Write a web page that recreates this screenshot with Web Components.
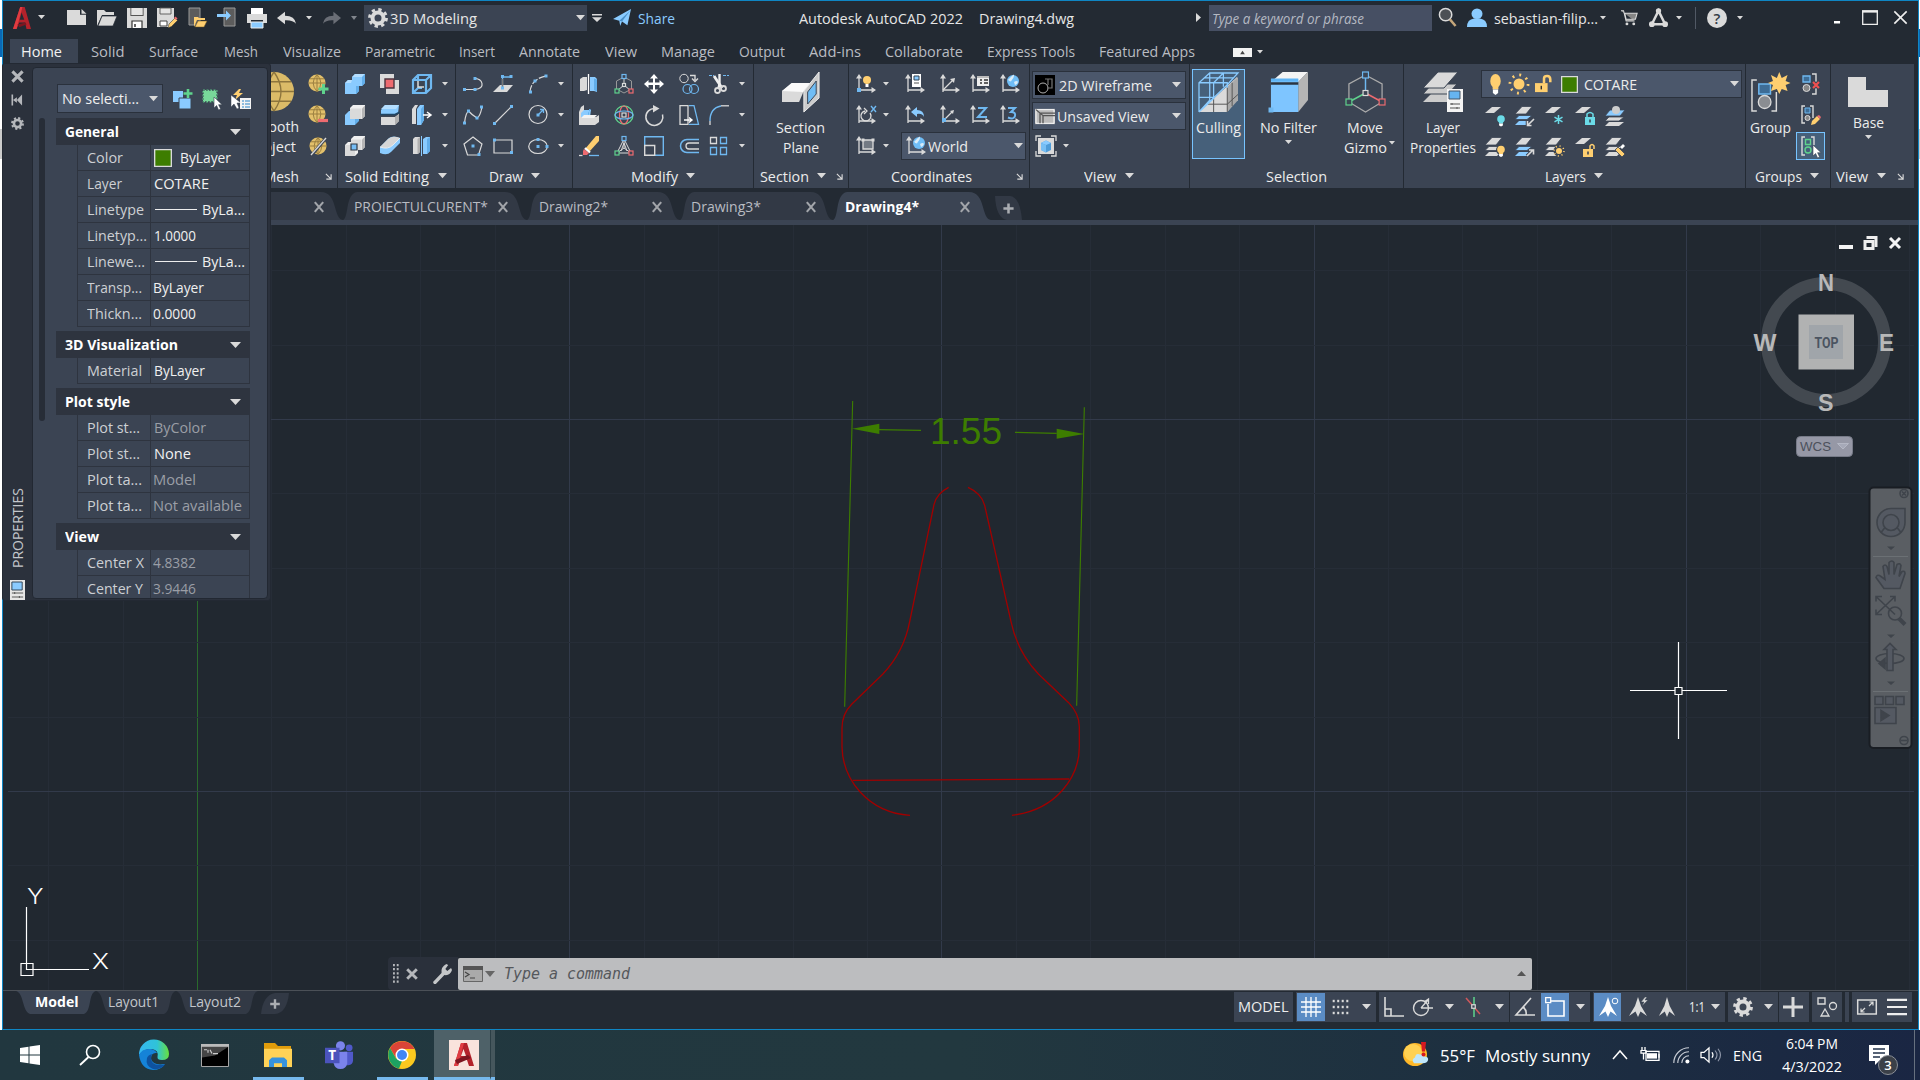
<!DOCTYPE html>
<html lang="en">
<head>
<meta charset="utf-8">
<title>Autodesk AutoCAD 2022</title>
<style>
html,body{margin:0;padding:0;background:#fff;overflow:hidden}
body{font-family:"Open Sans","Noto Sans",sans-serif;width:1920px;height:1080px}
</style>
</head>
<body>
<cad-desktop></cad-desktop>
<script>
const B='#8acbff',L='#dadada',Y='#ffcf70',G='#5fd38d',R='#ee6b70',C='#6fb8f0';
const p=(d,f,s='none',w=1,x='')=>`<path d="${d}" fill="${f||'none'}" stroke="${s}" stroke-width="${w}" ${x}/>`;
const sq=(x,y,c=C,s=3)=>`<rect x="${x-s/2}" y="${y-s/2}" width="${s}" height="${s}" fill="${c}"/>`;
const osq=(x,y,c,s=4)=>`<rect x="${x-s/2}" y="${y-s/2}" width="${s}" height="${s}" fill="#3b4453" stroke="${c}" stroke-width="1.2"/>`;
const ci=(x,y,r,f,s='none',w=1,e='')=>`<circle cx="${x}" cy="${y}" r="${r}" fill="${f}" stroke="${s}" stroke-width="${w}" ${e}/>`;
const cube=(x,y,s,a,b,c)=>p(`M${x} ${y+4}h${s}v${s}h${-s}z`,a)+p(`M${x} ${y+4}l4 -4h${s}l-4 4z`,b)+p(`M${x+s} ${y+4}l4 -4v${s}l-4 4z`,c);
const axes=p('M3 18V3M3 16H18',null,L,1.3)+p('M3 0l3 4.5H0zM20 16l-4.5 3v-6z',L);
const globe=(x,y,r)=>ci(x,y,r,'#6fbdf6')+p(`M${x-r+1} ${y-1}q${r*.8} ${-r*.9} ${r} ${-r+.5}q0 3 -1 4t-2 3q-2 0 -${r-2} -3zM${x+1} ${y+1}q3 -2 ${r-2} 0q-1 3 -3 3z`,'#d9ecf8');
const layer=(x,y,c=L)=>p(`M${x} ${y+6}l7 -6h9l-7 6z`,c);
/* Three stacked sheets; the lower two can take their own colour. */
const stack=(c1=L,c2=L)=>p('M0 19l4-4h12l-4 4z',c1)+p('M0 13.500l4-4h13l-5 4z',c2,'#3b4453',.8)+p('M0 8L7 .500h10L11 8z',L,'#3b4453',.8);
const ball=(r,cx,cy)=>ci(cx,cy,r,'#e2c06b')+p(`M${cx-r} ${cy}H${cx+r}M${cx} ${cy-r}V${cy+r}M${cx-r*.86} ${cy-r*.5}H${cx+r*.86}M${cx} ${cy-r}q${-r*.9} ${r} 0 ${2*r}M${cx} ${cy-r}q${r*.9} ${r} 0 ${2*r}`,null,'#94793c',.9);
const bulb=(x,y,r,c)=>ci(x,y,r,c)+p(`M${x-r*.55} ${y+r*.7}h${r*1.1}v${r*.5}h${-r*1.1}z`,c)+p(`M${x-r*.5} ${y+r*1.2}h${r}v${r*.5}l-${r*.5} ${r*.3}l-${r*.5} -${r*.3}z`,'#fff');
const sun=(x,y,r)=>ci(x,y,r,Y)+ci(x,y,r*1.65,'none',Y,r*.5,`stroke-dasharray="${r*.35} ${r*1.65*2*Math.PI/8-r*.35}"`);
const lock=(x,y,c)=>`<rect x="${x}" y="${y}" width="10" height="8" fill="${c}"/>`+p(`M${x+5} ${y+2.5}v3`,null,'#3b4453',1.6);
const arrow=(x,y)=>p(`M${x} ${y}l0 11 2.600 -2.500 2 4.500 2 -1 -2 -4.300h3.500z`,'#fff','#3b4453',.6);
const gearI=(c=L)=>ci(10,10,5.5,'none',c,4)+ci(10,10,8.4,'none',c,3,'stroke-dasharray="3.300 3.300"');
const tripod=(o)=>o+osq(10,2.500,C)+osq(3,17,G)+osq(17,17,R);
const navA=p('M10 0l3 9 6 10-6.500-4.500L10 20l-2.500-5.500L1 19 7 9z',L);

const ICONS={
 tri:'0 0 10 6|'+p('M0 0h10L5 6z',L), up:'0 0 10 6|'+p('M0 6h10L5 0z','#555'), rt:'0 0 6 10|'+p('M0 0v10l6-5z',L),
 dtri:'0 0 10 6|'+p('M0 0h10L5 6z','#666'), dim:'0 0 10 6|'+p('M0 0h10L5 6z','#80858c'),
 launch:'0 0 8 8|'+p('M1 1l6 6M7 1.500V7H1.500',null,L,1.3),
 acad:'0 0 20 24|'+p('M8 0h5l7 24h-5l-1.600-7H7L4 24H0z','#b3222b')+p('M8 0h2.500L4 24H0z','#e03c41')+p('M9.500 6L7.500 14h5z','#232a33')+p('M5 19l9-2 1 2-8 3z','#7d1620'),
 new:p('M0 2h13v5h6v11H0z',L)+p('M14.500 1l5 5h-5z',L),
 open:p('M0 18V2h7l2 2h8v3H5z',L)+p('M1 18L5 8h15l-4 10z',L,'#232a33',.7),
 save:p('M0 0h20v20H0z',L)+p('M4 0v7.500h12V0',null,'#555',1.200)+p('M4.500 0h11v7H4.500z','#e4e4e4')+p('M5 20v-7h10v7','#fff','#333',1.200)+p('M8 16v3',null,'#333',1.5),
 saveas:p('M0 0h17v12l-5 7H0z',L)+p('M3 0h11v6H3z','#e4e4e4','#555',.9)+p('M3 13h7v5H3z','#fff','#444')+p('M11 20l1-4 6-6 2.500 2.500-6 6z',Y,'#232a33',.5)+p('M17 10l1.500-1.500 2 2L19 12z',R),
 openm:p('M2 0h11v17H2z','#5c5c5c','#999')+p('M7 19V9h4l1 1h6v2h-8z',Y)+p('M8 19l3-6h9l-3 6z',Y,'#6a5320',.5),
 savem:p('M7 0h11v18H7z','#5c5c5c','#999')+p('M0 6h9V2.500l5 5-5 5V9H0z',B),
 print:p('M4 0h12v6H4z','#fff')+p('M0 6h20v9h-4v-3H4v3H0z',L)+p('M4 14h12v6H4z',B,'#eee'),
 undo:p('M0 10l8-7v4.500q10 0 11 9-3-4.500-11-4v4.500z',L),
 redo:p('M20 10l-8-7v4.500q-10 0-11 9 3-4.500 11-4v4.500z','#6a6e76'),
 gear:gearI(),
 cust:'0 0 12 10|'+p('M0 0h12v2H0zM0 4h12L6 10z',L),
 share:p('M0 11L20 0 16 18l-6-4-2 5-1-6z',B)+p('M7 13L19 2 10 14z','#4a90c8'),
 mag:ci(8,7,6.500,'#4c5055',L,1.600)+p('M12.500 12l6 7',null,'#c5a77c',2.6),
 user:ci(10,6,5.500,B)+p('M0 20q0-8 7-9h6q7 1 7 9z',B),
 cart:p('M0 2h3l3 12h10M4.500 5H19l-2 7H6z','#858585',L,1.2)+ci(7,17.500,1.700,L)+ci(15,17.500,1.700,L),
 a360:p('M10 3L3 17H17z',null,L,2.6)+ci(10,3,2.8,L)+ci(3,17,3,L)+ci(17,17,3,L),
 help:ci(10,10,10,L)+`<text x="10" y="15.500" text-anchor="middle" font-size="15" font-family="Open Sans" font-weight="600" fill="#333a44">?</text>`,
 wmin:p('M0 13h11v2.500H0z','#fff'),
 wmax:p('M2.700 3h14.600v13.300H2.700z',null,'#eee',1.3)+p('M2 3.500h16',null,'#eee',2.200),
 wclose:p('M3.500 3.500l13 13M16.500 3.500l-13 13',null,'#eee',1.700),
 featured:'0 0 20 10|'+p('M0 0h20v10H0z','#f2f2f2')+p('M7.500 7h5L10 3z','#444'),
 bigball:'0 0 40 40|'+ci(20,20,20,'#dbbb68')+p('M0 20H40M3 10H37M3 30H37M20 0q-14 20 0 40M20 0q14 20 0 40',null,'#8d753d',1.4),
 meshp:ball(8.500,9,9)+p('M15.500 10v10M10.500 15h10',null,G,3), meshm:ball(8.500,9,9)+p('M10 15.500h10',null,R,3.2), meshs:ball(8.500,10,10)+p('M3 20L18 2',null,'#3b4453',3)+p('M3 19L18 2',null,L,1.3),
 union:p('M0 9l3-3h4V3l3-3h10v9l-3 3h-3v5l-3 3H0z',B)+p('M7 3l3-3h10l-3 3zM0 9l3-3h4l-1 3z','#b4deff')+p('M17 3l3-3v9l-3 3zM11 12h3v5l-3 3z','#62aeea'),
 sub:cube(0,6,10,B,B,'#62aeea')+p('M5 3l3-3h12v11l-3 3H5z','#f0f0f0')+p('M5 3.500h11.500V14H5z',L)+p('M17 3.500l3-3v10.500l-3 3z','#b5b5b5'),
 inter:p('M0 9l3-3h10v11l-3 3H0z','#f0f0f0')+p('M0 9h10v11H0z',L)+p('M6 3l3-3h11v11l-3 3H6z','#f0f0f0')+p('M6 3.500h10.500V14H6z',L)+p('M17 3.500l3-3v10.500l-3 3z','#b5b5b5')+p('M6 8h6v6H6z','#76bdf5','#2f3844',1.200),
 imprint:p('M0 0h14v14H0z',L)+p('M6 6h13v14H6z',L)+p('M5 5h9v9H5z',R,'#4c353f',1.400),
 slice:p('M1 5l4-5h14l-1 9H1z',B)+p('M1 4l4-4h14l-3 4z','#b4deff')+p('M0 9.500h15l5-2.500',null,'#1f4564',1.500)+p('M1 12h14l4-3v7l-4 4H1z',L)+p('M15 12l4-3v7l-4 4z','#b0b0b0'),
 fillet3:p('M0 11l9-9q4-3 11 0v5l-9 9q-4 4-11 1z',B)+p('M0 11L8 3q5-4 12-1l-7 7q-5 5-13 2z','#d6d6d6')+p('M0 11q8 3 13-2l7-7',null,'#f2f2f2',.8),
 extr:p('M1 6l5-5h13v13l-5 5H1zM1 6h13v13M14 6l5-5M6 1v4M1 19l5-5h4',null,C,2.200)+p('M6 7v6h6',null,L,1.500),
 offf:p('M0 4l3-4h3L4 4v15H0z',L)+p('M5 4l3-4h4v15l-3 5H5z',B)+p('M9 4l3-4v15l-3 5z','#62aeea')+p('M11 10h7M15 7l4 3-4 3',null,'#fff',1.5),
 split:p('M1 3l2-2h5v15l-2 2H1z',L)+p('M5.500 3l2.500-2v15l-2.500 2z','#b0b0b0')+p('M11 3l3-2h4v14l-3 3h-4z',B)+p('M15 3l3-2v14l-3 3z','#62aeea')+p('M9.500 0v20',null,B,1),
 pline:p('M1 15.500h11q8-1 7-6t-8-5',null,L,1.2)+sq(1.500,15.500)+sq(12,15.500)+sq(12,4.500),
 polysol:p('M0 18l7-7h13l-6 7z',L)+p('M9.500 13V3h9',null,C,1.300)+p('M9.500 5v8',null,'#777',1.500)+sq(9.500,2.500)+sq(18,2.500)+sq(9.500,14),
 arc:p('M2 18Q3 5 18 2',null,L,1.2,'stroke-dasharray="7 1.500"')+sq(2.500,18)+sq(18,2)+sq(7,7),
 spline:p('M1.500 18Q3 6 6 6.500 9 10 14 13 17 12 19 2',null,L,1.2)+sq(1.500,18)+sq(5.500,6)+sq(14,13)+sq(18.500,2),
 line:p('M2 18L18 2',null,L,1.2)+sq(1.500,18.500)+sq(18.500,1.500),
 circ:ci(10,9.500,9,'none',L,1.200)+p('M10 10l5-5M12 4.500h3.500V8',null,C,1.300)+sq(10,10),
 poly:p('M10 1l9 7-3.500 11h-11L1 8z',null,L,1.200)+sq(10,10)+sq(16,18.500),
 rect:p('M1 4h18v13H1z',null,L,1.200)+sq(1.500,4)+sq(18.500,16.500),
 ell:`<ellipse cx="10" cy="10.500" rx="9.300" ry="7" fill="none" stroke="${L}" stroke-width="1.200"/>`+sq(10,10.500)+sq(19,10.500)+sq(10,3.500),
 mirror3:p('M1 5l3-2h4v13l-3 1H1z',L)+p('M11 3h5l2 2v13l-3-1h-4z',B)+p('M15 4.500l3 1v12l-3-1.500z','#62aeea')+p('M9.500 0v20',null,'#fff',1.300),
 gmove:tripod(p('M10 3l7.500 4v8L10 19l-7.500-4V7z',null,'#999')+p('M10 3v8L3 17M10 11l7 6',null,L)+osq(10,11,L,3)),
 grot:ci(10,10,9,'none',G,1.300)+`<ellipse cx="10" cy="10" rx="4.500" ry="9" fill="none" stroke="${R}" stroke-width="1.200"/><ellipse cx="10" cy="10" rx="9" ry="4" fill="none" stroke="${C}" stroke-width="1.200"/>`+osq(10,10,L,4),
 gscale:tripod(p('M10 3L3 17h14zM10 3v9L3 17M10 12l7 5M7 15l3-8 3 8',null,L)),
 move:p('M10 0l4 4.500h-3v4h4.500V6L20 10l-4.500 4v-3H11v4.500h3L10 20l-4-4.500h3V11H4.500v3L0 10l4.500-4v2.500H9v-4H6z','#fff'),
 copy:ci(5,4.500,4.200,'none',L)+ci(8.500,15,4.500,'none',C,1.200)+ci(15,15,4.500,'none',C,1.200)+p('M11 1.500h5V6M13 4.500l3 3 3-3',null,L,1.400),
 trim:p('M0 1.500h5M14 1.500h6',null,C,1.200,'stroke-dasharray="3 1"')+p('M5 2l8 12',null,'#eee',2.800)+p('M10.500 0V10l-1 4',null,'#eee',2.400)+ci(8.500,16.500,2.500,'none',L,1.800)+ci(14.500,14.500,2.500,'none',L,1.800),
 align3:p('M0 7l2-5 3-2v6l-3 4v2h15l3-2v7l-4 3H0z',L)+p('M2 8l3-3h7l-1 7H2z',B)+p('M9 8l3-4h-1l-1-0v8z','#62aeea')+p('M3 12l2-2h13l-3 3H3z','#f2f2f2'),
 rot:p('M11 3.500A8.500 8.500 0 1 0 18.500 9.500',null,L,1.500)+p('M9 0l6.500 3.500-6.500 4z',L),
 stretch:p('M1 .7h8v18.600H1z',null,L,1.300)+p('M10 .7h5l4.500 18.600H10',null,C,1.300)+p('M5 15h8M10 12.500l3 2.500-3 2.500',null,'#fff',1.400),
 fillet:p('M1 20V16',null,L,1.300)+p('M1 16Q1 3 12 1',null,C,1.400)+p('M12 .8h8',null,L,1.300),
 erase:p('M6 13L17 0h3v5L10 16z',Y)+p('M5 13l5 4-2 2H4v-4z',R)+p('M6 12l5 4.500',null,'#fff',2.200)+p('M0 19.500h3.500',null,L,1.300)+p('M10 19.500h10',null,C,1.300),
 scale:p('M.7 9V.7h18.600v18.600H11',null,C,1.400)+p('M.7 9.500h10v9.800H.7z',null,L,1.400),
 offset:p('M20 3.500H8a6.500 6.500 0 0 0 0 13h12',null,C,1.500)+p('M20 7h-10a3 3 0 0 0 0 6h10',null,L,1.300)+ci(7,10,2.500,'none','#3b4453',0),
 array:p('M1.500 1.500h6v6h-6z',null,L,1.300)+p('M1.500 11.500h6v7h-6zM11.500 1.500h6v6h-6zM11.500 11.500h6v7h-6z',null,C,1.300),
 secplane:'0 0 40 40|'+p('M0 19l10-7h16l-8 18H0z',L)+p('M0 19l10-8h24L22 20z','#fafafa')+p('M23 19L39 0v26L23 40z','#ccc','#eee',1)+p('M27 20L36 9v13l-9 10z','#70bdf5','#3a4452',1),
 ucs1:axes+ci(11,6,4,Y)+p('M9.500 10h3v3h-3z','#fff')+sq(3,16,C,4),
 ucs2:axes+p('M14 8a5 5 0 1 1-5-2M8 3l3 3-3 3',null,L,1.300)+p('M15 1l5 6M20 1l-5 6',null,C,1.400),
 ucs3:axes+p('M7 4h10v9H7z','#737a84',L,1.300)+sq(7,4,L)+sq(17,4,L),
 ucs4:axes+p('M7 0h9v13H7z','#fff')+p('M9 2h5v4H9z',B,'#345')+p('M9 9h5',null,'#555'), ucs5:axes+p('M3 16L13 6',null,L,1.300)+p('M15 4l-5 1 4 4z',L),
 ucs6:axes+p('M7 2h12v10H7z','#eee')+p('M10 6h2M10 9h2M14 6h4M14 9h4',null,'#333',1.300)+p('M7 2h12v2H7z','#bbb'), ucs7:axes+globe(13,7,6),
 ucs8:axes+p('M6 7l6-5v3q7 0 7 7-2-4-7-3v3z',B), ucs9:axes+p('M5 14l7-7',null,L,1.300)+p('M14 5l-4 1 3 3z',L)+sq(4,15,C,4),
 ucs10:axes+p('M8 3h8L8 12h9',null,C,2), ucs11:axes+p('M8 3h7l-4 4q5 0 4 4t-7 1.500',null,C,2),
 wire:p('M0 0h20v20H0z','#000')+ci(8,13,5,'none','#b0b0b0')+p('M10 4h7v9h-5M13 4v6',null,'#777',1.200),
 uview:p('M0 1h20v18H0z','#bbb')+p('M1 2h18v16H1z',null,'#fff')+p('M5 18V6h15M8 18V9h12M1 2l7 7',null,'#555',1.300),
 vbox:p('M2 2h16v16H2z',L)+p('M0 5V0h5M15 0h5v5M20 15v5h-5M5 20H0v-5',null,L,1.300)+p('M5 7l5-2.500L15 7v7l-5 2.500L5 14z','#4f9cd8')+p('M5 7l5 2 5-2-5-2.500z',B)+p('M5 7l5 2v7.500L5 14z','#78bff5'),
 cull:'0 0 40 40|'+p('M0 40L39 4v23L29 40z',L)+p('M29 14l11-10v24L29 40z','#a9a9a9')+p('M15 26v14M29 14v26M9 32h20l11-10M34 10v24',null,'#555',1)+p('M0 40V10L11 0h29L29 12 0 40M0 10h29v5M10 40M15 10v16L0 40M0 25h15M15 10L25 0M11 0v28L0 40M5 5h30M25 0v14',null,B,1.300),
 nofilter:'0 0 40 40|'+p('M2 10L14 0h26L30 10z','#f4f4f4')+p('M30 10L40 0v28L30 40z','#b5b5b5')+p('M2 7h28v33H2z','#7ec5ff')+p('M2 11.500h28',null,'#2b3440',2.500)+p('M2 8h28',null,'#5eb4f5',3)+sq(2,38,C,5),
 mgizmo:'0 0 40 40|'+p('M20 3l17 9v18L20 40 3 30V12z',null,'#aaa',1.300)+p('M20 3v18',null,C,1.500)+p('M20 21L3 30',null,G,1.500)+p('M20 21l17 9',null,R,1.500)+osq(20,3,C,6)+osq(3,30,G,6)+osq(37,30,R,6)+osq(20,21,L,5),
 layerp:'0 0 40 40|'+p('M0 30l9-9h26l-8 9z','#ccc')+p('M0 22l9-10h25l-9 10z','#ccc','#3b4453',1)+p('M0 16L15 0h20L21 16z',L,'#3b4453',1)+p('M24 17h16v23H24z','#f4f4f4')+p('M26 19h11v8H26z','#66b4f0','#456')+p('M27 32h10M27 36h10M29 31v2M34 35v2',null,'#555',1),
 bulb:bulb(10,7,7,Y),sun:sun(10,10,5.500),
 unlock:p('M0 9h14v10H0z',Y)+p('M10 9V4q0-3 3.500-3T17 5v3',null,Y,2.800)+p('M7 12v4',null,'#333',1.600),
 green:p('M.75.75h18.500v18.500H.75z','#3d7d00',L,1.500),
 lo1:layer(0,1)+bulb(16,13,3.800,'#6bdbe8'), lo2:stack(B,B)+p('M19 13l-6 6M12.500 15v4.500h4',null,'#3b4453',3.500)+p('M19 13l-6 6M12.500 15v4.500h4',null,L,1.600), lo3:layer(0,1)+p('M13.500 9v9M9.500 11.200l8 4.600M17.500 11.200l-8 4.600',null,'#6bdbe8',1.500), lo4:layer(0,1)+lock(10,11,'#6bdbe8')+p('M12 11V8q3-3 6 0v3',null,'#6bdbe8',1.500),
 lo5:p('M0 20l4-4h15l-5 4z',L)+p('M0 15l4-4h15l-5 4z',L,'#3b4453',.8)+p('M0 10l5-6h15l-5 6z',B,'#3b4453',.8)+ci(11,4,4,'#ccc'), lo6:stack()+ci(16,13,5,'#3b4453')+bulb(16,12.500,3.800,Y), lo7:stack(B,B)+p('M12 19l6-6M14 13h5v5',null,'#3b4453',3.500)+p('M12 19l6-6M14 13h4.500v4.500',null,L,1.600), lo8:stack()+ci(14,14,5.500,'#3b4453')+sun(14,14,3), lo9:layer(0,1)+lock(8,12,Y)+p('M15 12V9q2-3 4 0v3',null,Y,1.500), lo10:stack()+p('M10 13l3-3 7 7-3 3z',Y,'#3b4453',.8)+p('M15 10l3-3 2 2-3 3z','#fff'),
 group:'0 0 40 40|'+p('M6 8H1v31h5M21 39h5V20',null,L,1.500)+p('M8 12h12v10H8z','#3e6d96',C,1.500)+ci(14,30,6.500,'#8a8d92',L,1.300)+p('M29 0l2.500 6 6-3-2 6 5 2-5 2 2 6-6-2-2.500 5-2.500-5-6 2 2-6-5-2 5-2-2-6 6 3z',Y),
 ungroup:p('M1 2h7v6H1z','#3e6d96',C,1.300)+ci(4.500,14,3.500,'#888',L)+p('M10 0h4v20h-4',null,L,1.400)+p('M11 8l6 6M17 8l-6 6',null,'#3b4453',4)+p('M11 8l6 6M17 8l-6 6',null,'#f05050',2.200),
 gedit:p('M4 1H1v17h3M9 1h3v12',null,L,1.400)+p('M4 3h5v5H4z','#3e6d96',C)+ci(6.500,13,2.500,'#888',L)+p('M10 20l1-4 5-5 3 3-5 5z',Y)+p('M16 11l2-1 2 2-1 2z',R),
 gsel:p('M4 1H1v18h3M10 1h3v8',null,L,1.400)+p('M4.500 3.500h5v5h-5z',null,G,1.400)+ci(7,14,3,'none',G,1.400)+arrow(12,9),
 base:'0 0 40 30|'+p('M0 0h18v13h22v17H0z',L),
 x:p('M4 4l12 12M16 4L4 16',null,'#b5b7bb',3.600), xx:p('M4 3l12 14M16 3L4 17',null,'#a2a5aa',3),
 pin:p('M2 2v16',null,'#b5b7bb',2.500)+p('M3 10l6-4v8z','#b5b7bb')+p('M9 10l8-8v16z','#b5b7bb'),
 pgear:gearI('#b5b7bb'),
 padd:p('M0 2h10v11H0z',B)+p('M6 9h12v11H6z',B,'#3b4453',1)+p('M15 0v9M10.500 4.500h9',null,G,2.600),
 psel:p('M1 1h14v12H1z','#78d89a')+p('M1 1h14v12H1z',null,'#3b4453',1.300,'stroke-dasharray="2 1"')+p('M1 1h14v12H1z',null,G,.8,'stroke-dasharray="2 1.500"')+arrow(12,8),
 pquick:p('M8 0L2 6h4l-2 5 8-7H8l2-4z',Y)+p('M0 6v12l3-3 3 5 2-1-2-5h4z','#fff','#3b4453',.5)+p('M9 9h11v11H9z','#f4f4f4')+p('M11 12h2M11 15h2M11 18h2M14 12h5M14 15h5M14 18h5',null,'#2b84c8',1.200),
 pcard:'0 0 16 20|'+p('M0 0h16v20H0z','#e6e6e6')+p('M2 2h11v8H2z',B,'#345',1)+p('M2 13h12M2 17h12M5 12v2M10 16v2',null,'#555'),
 plus:p('M10 4v12M4 10h12',null,'#aaadb2',3),
 grip:'0 0 8 24|'+[0,4.500,9,13.500,18].map(y=>`<path d="M0 ${y+1}h2.500v2.500H0zM5 ${y+1}h2.500v2.500H5z" fill="#b5b7bb"/>`).join(''),
 wrench:p('M1 20L0 18 9 9q-1-6 5-9l2 1-3 4 2 2 4-3 1 2q-2 6-8 5L3 20z','#c4c6c8'),
 cmd:'0 0 20 16|'+p('M.5.5h19v15H.5z','#aaa','#666')+p('M0 0h20v4H0z','#555')+p('M2 6l4 2.500L2 11M7 12h5',null,'#444',1.200),
 sgrid:p('M5 0v20M10 0v20M15 0v20M0 5h20M0 10h20M0 15h20',null,'#fff',1.300),
 sdots:[2,7.300,12.600,18].map(x=>[4,10,16].map(y=>sq(x,y,L,2.400)).join('')).join(''),
 sortho:p('M1 0v19h19M1 12h6v7',null,L,1.600), spolar:ci(8,11,7.500,'none',L,1.400)+p('M8 11h12M8 11l7-8M11 5l4.500-3v5',null,L,1.300),
 siso:p('M2 1l14 16',null,'#d0585c',1.500)+p('M10 0v20',null,G,1.500)+osq(9.500,9.500,L,3.500), sang:p('M16 1L1 18h19M8 10q4 3 3 8',null,L,1.600), sosnap:p('M6 4h13v15H3V7',null,'#fff',1.600)+p('M.7.7h5v5h-5z',null,'#fff',1.300),
 sa1:navA.replaceAll(L,'#fff')+ci(17,4,2.800,'none','#fff'), sa2:navA+p('M17 0l-4 5h3l-2 4 6-6h-3l2-3z',L,'#3b4453',.5), sa3:navA,
 splus:p('M10 0v20M0 10h20',null,L,3), siso2:p('M1 1h7v6H1z',null,L,1.400)+ci(16,9,3.500,'none',L,1.300)+p('M8 12l4 7H4z',null,L,1.300),
 sfull:p('M.7 3h18.600v14H.7z',null,L,1.500)+p('M12 9l4-4M12.500 5H16v3.500M8 11l-4 4M4 11.500V15h3.500',null,L,1.200), sburger:p('M0 2h20M0 10h20M0 18h20',null,'#eee',2.400),
 win:p('M0 3l8.500-1.200V9.500H0zM9.500 1.600L20 0v9.500H9.500zM0 10.500h8.500v7.700L0 17zM9.500 10.500H20V20L9.500 18.400z','#fff'),
 tsearch:ci(13,7,6.500,'none','#fff',1.600)+p('M8.500 12L0 20',null,'#fff',1.800),
 edge:'0 0 30 30|<defs><linearGradient id="e1" x1="0" x2="1"><stop offset="0" stop-color="#35b8f1"/><stop offset=".6" stop-color="#2fc3d8"/><stop offset="1" stop-color="#68e03c"/></linearGradient></defs>'+p('M0 15A15 15 0 0 1 30 14Q30 20 23 20 18 20 18.500 17 20 10 13 9 5 8 0 15z','url(#e1)')+p('M0 15Q3 8 12 9 16 9.500 18 13 12 12 12 19 14 26 26 24 22 30 14 30 2 29 0 15z','#1583d8')+p('M12 17q0 9 10 8 4 0 5-2-4 7-13 6Q6 26 8 18q1-3 5-4z','#0e529f'),
 tcmd:'0 0 28 24|'+p('M.5.5h27v23H.5z','#000','#aaa')+p('M0 0h28v3H0z','#bbb')+p('M1 3h26L14 12 1 14z','#454545')+p('M3 6h3M7 6v3M9 6l2 4M12 10h5',null,'#ccc',1.200),
 folder:'0 0 28 26|'+p('M0 0h11l3 3h13v8H0z','#e09c0b')+p('M0 6h28v19H0z','#ffd257')+p('M5 25V18l3-3h12l3 3v7h-5v-4h-8v4z','#3792dc'),
 teams:'0 0 30 30|'+ci(16,5,4.700,'#7b83eb')+ci(25,7,3.500,'#5059c9')+p('M20 11h9v9q0 5-5 5h-4z','#5059c9')+p('M9 11h14v12q-1 6-7 6t-7-6z','#7b83eb')+p('M0 7h15v16H0z','#4b53bc')+`<text x="7.500" y="20" text-anchor="middle" font-size="14" font-family="Open Sans" font-weight="700" fill="#fff">T</text>`,
 chrome:'0 0 28 28|'+ci(14,14,14,'#fbc91f')+p('M2 7A14 14 0 0 1 26.500 8H14L8 17z','#db4437')+p('M2 7l6 10.500L14 20l-3 7.500A14 14 0 0 1 2 7z','#1da362')+ci(14,14,6.500,'#fff')+ci(14,14,5,'#4286f4'),
 tacad:'0 0 30 30|'+p('M0 0h30v30H0z','#f9e3dc')+p('M12 3h6l7 23h-5l-2-6h-7l-2 6H5z','#b3222b')+p('M12 3h3L9 26H5z','#df3c42')+p('M14.500 9l-2.500 7h5z','#f9e3dc')+p('M6 20l13-5 3 3-14 6z','#7d1620'),
 weather:'0 0 26 26|'+ci(12,13,12,'#ffb828')+ci(10,11,9,'#ffd152')+p('M11 22q-3-4 1-6 1-5 5-3 3-1 4 2 5 0 4 4-1 3-5 3z','#bfe6fb')+p('M18 0h5l-1 10h-3z','#d71920')+ci(20.500,13,2,'#d71920'),
 caret:p('M3 14l7-8 7 8',null,'#fff',1.500), batt:p('M6 6h13v10H6z',null,'#fff',1.300)+p('M7 8h10v6H7z','#fff')+p('M19 9v4M2 1v4M5 1v4M1 5h5v3H1zM3.500 8v7',null,'#fff',1.300),
 wifi:p('M1 20A19 19 0 0 1 20 1M6 20A14 14 0 0 1 20 6M11 20a9 9 0 0 1 9-9',null,'#c9ced6',1.400)+ci(18,18,2.500,'#fff'),
 vol:p('M1 7h3l5-5v16l-5-5H1z',null,'#fff',1.300)+p('M12 7q2 3 0 6',null,'#fff',1.200)+p('M15 5q4 5 0 10M18 3q5 7 0 14',null,'#8b93a5',1.200),
 notif:'0 0 20 20|'+p('M0 0h20v16H10l-4 4v-4H0z','#fff')+p('M4 4h12M4 8h12M4 12h7',null,'#20304a',1.500),
 mdimin:'0 0 14 5|'+p('M0 0h14v4H0z','#f4f4f4'), mdires:'0 0 14 14|'+p('M3 0h11v11h-3V3H3z','#eee')+p('M1.500 5.500h8v7h-8z',null,'#eee',3), mdix:'0 0 14 14|'+p('M2 2l10 10M12 2L2 12',null,'#f4f4f4',3)
};

const define=(n,css,render)=>customElements.define(n,class extends HTMLElement{
  connectedCallback(){ if(this.shadowRoot)return; const r=this.attachShadow({mode:'open'}); r.innerHTML=`<style>${css}</style>`+render(this); if(this.tagName=='CAD-TEXT')this.fit(r);}
  fit(r){const s=r.querySelector('span'),w=parseFloat(this.getAttribute('w')); const n=s.getBoundingClientRect().width; if(w&&n)s.style.transform=`scaleX(${w/n})`;}
});
define('cad-icon',':host{display:block;flex:none;line-height:0}svg{display:block;width:100%;height:100%;overflow:visible}',e=>{
  let c=ICONS[e.getAttribute('name')],v='0 0 20 20'; const i=c.indexOf('|'); if(i>0){v=c.slice(0,i);c=c.slice(i+1);}
  return `<svg viewBox="${v}" preserveAspectRatio="none">${c}</svg>`;});
define('cad-text',':host{display:block;flex:none;white-space:nowrap;line-height:20px}span{display:inline-block;transform-origin:0 50%}',()=>'<span><slot></slot></span>');
define('cad-row',':host{display:flex;align-items:center;flex:none;box-sizing:border-box}',()=>'<slot></slot>');

/* Flow helpers: every item carries its left edge and width; a row turns them into successive margins. */
const T=(t,x,w,o='')=>[x,w,m=>`<cad-text w="${w}" style="width:${w}px;margin-left:${m}px;${o}">${t}</cad-text>`];
const I=(n,x,w=20,h=20,o='')=>[x,w,m=>`<cad-icon name="${n}" style="width:${w}px;height:${h}px;margin-left:${m}px;${o}"></cad-icon>`];
const X=(x,w,o,inner='')=>[x,w,m=>`<cad-row style="width:${w}px;margin-left:${m}px;${o}">${inner}</cad-row>`];
const tri=(cx,s=9,o='')=>I('tri',cx-s/2,s,s*.58,o);
const row=(x0,h,items,o='')=>`<cad-row style="height:${h}px;${o}">${flow(x0,items)}</cad-row>`;
function flow(x0,items){let c=x0;return items.map(([x,w,f])=>{const s=f(+(x-c).toFixed(2));c=x+w;return s;}).join('');}

define('cad-titlebar',':host{display:block;height:35px;color:#e6e6e6;font-size:15px}',()=>row(3,33,[
 I('acad',13,18,22),tri(41,7),I('new',67,20,19),I('open',97),I('save',127),I('saveas',157),I('openm',187),I('savem',217),I('print',247),I('undo',277,20,18),tri(309,6),I('redo',322,19,18),I('dim',351,6,4),
 X(364,223,'height:26px;background:#3b4453',flow(364,[I('gear',368),T('3D Modeling',390,87),tri(580,9)])),
 I('cust',592,10,8),I('share',613,18,18),T('Share',638,37,'color:#8acbff'),T('Autodesk AutoCAD 2022',799,164),T('Drawing4.dwg',979,95),I('rt',1196,5,9),
 X(1209,223,'height:26px;background:#464f63',flow(1209,[T('Type a keyword or phrase',1212,152,'font-style:italic;color:#b5b9c2')])),
 I('mag',1438,19,19),I('user',1467,20,19),T('sebastian-filip...',1494,104),tri(1603,6),I('cart',1621,17,17),I('a360',1649,19,19),tri(1679,6),X(1695,1,'height:22px;background:#515965'),I('help',1707),tri(1740,6),
 I('wmin',1834,11,20),I('wmax',1860,20,20),I('wclose',1891,19,19)]));

define('cad-menutabs',':host{display:block;height:28px;color:#b9bcc2;font-size:15px}',()=>row(3,28,[
 X(10,68,'height:25px;background:#3b4453;align-self:flex-end;color:#f2f2f2;padding-bottom:2px',flow(10,[T('Home',21,41)])),
 ...[['Solid',91,33.5],['Surface',149,49],['Mesh',224,34],['Visualize',283,58],['Parametric',365,70],['Insert',459,36],['Annotate',519,61],['View',605,32],['Manage',661,54],['Output',739,46],['Add-ins',809,52],['Collaborate',885,78],['Express Tools',987,88],['Featured Apps',1099,96]].map(a=>T(...a,'margin-top:1px')),
 I('featured',1233,19,9,'margin-top:4px'),tri(1260,6,'margin-top:4px')]));

const combo=(x,w,inner)=>X(x,w,'height:28px;background:#4b576b;border:1px solid #2a313c',flow(x+1,inner));
const panel=(x0,x1,body,label)=>`<cad-panel style="width:${x1-x0}px">${body}${row(x0,24,label,'margin-top:auto')}</cad-panel>`;
define('cad-panel',':host{display:flex;flex-direction:column;flex:none;height:124px;box-sizing:border-box;border-right:1px solid #232a33;padding-top:4px}',()=>'<slot></slot>');
const big=(x0,x,w,ic,iw,ih,lines,o='',t='')=>`<cad-big style="width:${w}px;margin-left:${x-x0}px;${o}"><cad-icon name="${ic}" style="width:${iw}px;height:${ih}px;align-self:center"></cad-icon>${lines.map(l=>`<cad-text w="${l[1]}" style="width:${l[1]}px;align-self:center">${l[0]}</cad-text>`).join('')}${t}</cad-big>`;
define('cad-big',':host{display:flex;flex-direction:column;flex:none;box-sizing:border-box;padding-top:4px}::slotted(cad-icon){margin-bottom:5px}',()=>'<slot></slot>');
define('cad-hbox',':host{display:flex;height:93px;flex:none}',()=>'<slot></slot>');
define('cad-vbox',':host{display:flex;flex-direction:column;flex:none}',()=>'<slot></slot>');
const rows3=(x0,rs)=>rs.map(r=>row(x0,31,r)).join('');
const smallTri='<cad-icon name="tri" style="width:7px;height:4px;align-self:center;margin-top:3px"></cad-icon>';
define('cad-ribbon',':host{display:flex;width:1912px;height:124px;background:#3b4453;color:#ececec;font-size:15px;overflow:hidden}',()=>
 panel(3,338,`<cad-hbox>${big(3,248,51,'bigball',40,39,[['Smooth',51],['Object',44]])}<cad-vbox>${rows3(299,[[I('meshp',308)],[I('meshm',308)],[I('meshs',308)]])}</cad-vbox></cad-hbox>`,[T('Mesh',264,35),I('launch',325,7,7)])+
 panel(338,456,rows3(338,[[I('union',345),I('imprint',380),I('extr',412),tri(445,6)],[I('sub',345),I('slice',380),I('offf',412),tri(445,6)],[I('inter',345),I('fillet3',380),I('split',412),tri(445,6)]]),[T('Solid Editing',345,84),tri(442)])+
 panel(456,573,rows3(456,[[I('pline',463),I('polysol',493),I('arc',528),tri(561,6)],[I('spline',463),I('line',493),I('circ',528),tri(561,6)],[I('poly',463),I('rect',493),I('ell',528),tri(561,6)]]),[T('Draw',489,34),tri(535)])+
 panel(573,754,rows3(573,[['mirror3','gmove','move','copy','trim'],['align3','grot','rot','stretch','fillet'],['erase','gscale','scale','offset','array']].map(r=>[...r.map((n,i)=>I(n,[579,613.5,644,679,709][i])),tri(742,6)])),[T('Modify',631,47),tri(690)])+
 panel(754,849,`<cad-hbox>${big(754,754,93,'secplane',38,40,[['Section',49],['Plane',36]])}</cad-hbox>`,[T('Section',760,49),tri(821),I('launch',836,7,7)])+
 panel(849,1030,rows3(849,[[I('ucs1',856),tri(886,6),I('ucs4',905),I('ucs5',940),I('ucs6',970),I('ucs7',1000)],[I('ucs2',856),tri(886,6),I('ucs8',905),I('ucs9',940),I('ucs10',970),I('ucs11',1000)],[I('ucs3',856),tri(886,6),combo(901,125,[I('ucs7',906),T('World',928,40),tri(1018)])]]),[T('Coordinates',891,81),I('launch',1016,7,7)])+
 panel(1030,1190,row(1030,34,[combo(1032,154,[I('wire',1035),T('2D Wireframe',1059,93),tri(1176)])])+row(1030,28,[combo(1032,154,[I('uview',1035,20,17),T('Unsaved View',1057,92),tri(1176)])])+row(1030,31,[I('vbox',1036),tri(1066,6)]),[T('View',1084,32),tri(1129)])+
 panel(1190,1404,`<cad-hbox>${big(1190,1192,53,'cull',39,39,[['Culling',45]],'background:#46607a;border:1px solid #77c4ff;height:90px;margin-top:1px;padding-top:3px;margin-bottom:-2px')}${big(1245,1258,60,'nofilter',39,40,[['No Filter',57]],'',smallTri)}${big(1318,1341,48,'mgizmo',39,40,[['Move',36],['Gizmo',43]])}${row(1389,93,[tri(1392,6)],'padding-top:73px;align-items:flex-start')}</cad-hbox>`,[T('Selection',1266,61)])+
 panel(1404,1746,`<cad-hbox>${big(1404,1408,70,'layerp',40,40,[['Layer',34],['Properties',66]])}<cad-vbox>${row(1478,32,[combo(1481,261,[I('bulb',1488,15,20),I('sun',1509),I('unlock',1535,18,18),I('green',1561,17,17),T('COTARE',1584,53),tri(1734)])])}${row(1478,31,[1,2,3,4,5].map(i=>I('lo'+i,1455+30*i)))}${row(1478,31,[6,7,8,9,10].map(i=>I('lo'+i,1305+30*i)))}</cad-vbox></cad-hbox>`,[T('Layers',1545,41),tri(1598)])+
 panel(1746,1831,`<cad-hbox>${big(1746,1749,43,'group',39,40,[['Group',41]])}<cad-vbox>${rows3(1792,[[I('ungroup',1802)],[I('gedit',1801)],[X(1796,29,'height:28px;background:#46607a;border:1px solid #77c4ff',flow(1797,[I('gsel',1801)]))]])}</cad-vbox></cad-hbox>`,[T('Groups',1755,47),tri(1814)])+
 panel(1831,1915,`<cad-hbox>${big(1831,1843,50,'base',40,30,[['Base',31]],'padding-top:9px;',smallTri)}</cad-hbox>`,[T('View',1836,32),tri(1881),I('launch',1897,7,7)]));

define('cad-doctabs',':host{display:block;height:37px;background:#232a33;color:#b9bcc2;font-size:14.5px}',()=>{
 const tab=(x,w,t,tx,tw,cx,o='')=>X(x,w,`height:28px;background:#323945;padding-top:2px;clip-path:path('M0 28C6 26 2 2 14 0H${w-22}C${w-5} 0 ${w-10} 27 ${w} 28Z');${o}`,flow(x,[...(t?[T(t,tx,tw)]:[]),I('xx',cx-7,14,14)]));
 return row(3,32,[tab(180,163,'',0,0,319),tab(343,184,'PROIECTULCURENT*',354,134,503),tab(527,153,'Drawing2*',539,69,657),tab(680,153,'Drawing3*',691,70,811),tab(833,158,'Drawing4*',845,74,965,'background:#3b4453;color:#fff;font-weight:700'),X(995,27,"height:24px;background:#323945;clip-path:path('M0 0H15Q25 1 27 24H12Q1 22 0 0Z')",flow(995,[I('plus',1000,17,17)]))],'align-items:flex-end')+`<cad-row style="height:5px;background:#3b4453"></cad-row>`;});

define('cad-drawing',':host{display:block;position:relative;height:765px;background:#212830}svg{display:block;width:1915px;height:765px}cad-command{position:absolute;left:385px;top:732px}',()=>{
 let g='';
 for(let i=-12;i<=13;i++){const x=941.9+i*74.44; if(x<8||x>1913)continue; const m=i%5==0; g+=`<path d="M${Math.floor(x)+.5} 225V990" stroke="${i==-10?'#2a6a2c':m?'#323a4a':'#262d37'}"/>`;}
 for(let i=-2;i<=7;i++){const y=419.5+i*74.4;if(y<226)continue;g+=`<path d="M8 ${Math.floor(y)+.5}H1914" stroke="${i%5==0?'#323a4a':'#262d37'}"/>`;}
 const st=(t,x,y,s,w,c,o='')=>`<text x="${x}" y="${y}" font-size="${s}" textLength="${w}" lengthAdjust="spacingAndGlyphs" fill="${c}" ${o}>${t}</text>`;
 const D='#3d7d00',AR='font-family="Liberation Sans"',bd=AR+' font-weight="700"',N='#3f444b';
 return `<svg viewBox="3 225 1915 765">${g}
 <g transform="translate(800 380) scale(.33333)" fill="none" stroke="#a00000" stroke-width="4"><path d="M446 322Q410 340 402 374L329 725Q312 815 248 883L155 973Q126 1002 126 1045V1100C128 1200 205 1298 330 1306"/><path d="M504 322Q545 340 554 376L633 725Q652 815 716 883L806 968Q838 1002 838 1040V1100C838 1190 770 1290 636 1306"/><path d="M158 1201L808 1197"/>
 <g stroke="${D}" stroke-width="3.400"><path d="M158 63L134 980M853 82L830 977M236 149L363 151M645 157L770 160"/><path d="M156 146L238 131V162zM853 162L770 146V176z" fill="${D}" stroke="none"/></g></g>
 ${st('1.55',930,443.5,37.5,72,D,AR)}
 <g fill="none" stroke="#fff" stroke-width="1.200"><path d="M26.500 907V969.500H89M21 963.500h12v12H21zM1630 690.500h45M1682 690.500h45M1678.500 642v45M1678.500 694v45M1675 687.500h7v7h-7z"/></g>
 ${st('Y',27,904,22,16.5,'#fff','font-family="Inter" font-weight="300"')}${st('X',92,969,22,17,'#fff','font-family="Inter" font-weight="300"')}
 <circle cx="1826" cy="342" r="58.500" fill="none" stroke="#434950" stroke-width="13"/>
 <rect x="1798.500" y="314.500" width="55.500" height="55" fill="#b1b2b2"/><rect x="1809" y="325" width="34" height="34" fill="#a0a5aa"/>
 ${st('TOP',1814.5,347.5,15.500,24,'#4b5461','font-family="Roboto" font-weight="700"')}
 ${st('N',1818,291,24,16,'#b8b8b8',bd)}${st('S',1818,411,24,15.5,'#b8b8b8',bd)}${st('E',1879,351,24,15,'#b8b8b8',bd)}${st('W',1753.5,351,24,23,'#b8b8b8',bd)}
 <rect x="1796.500" y="436.500" width="56" height="20" rx="4" fill="#9698a6" stroke="#777b88"/>${st('WCS',1800,451,13,31,'#4c505b',AR)}<path d="M1837.500 443.500h11l-5.500 5.500z" fill="#a6a9b8" stroke="#b4b7c4"/>
 <rect x="1869.500" y="487.500" width="42" height="260.500" rx="4" fill="#5a5e63" stroke="#191d23" stroke-width="2"/>
 <g transform="translate(1870 487.500)" stroke="${N}" fill="none" stroke-width="1.600"><circle cx="34" cy="6" r="4"/><path d="M32 4l4 4M36 4l-4 4"/><path d="M21 21H35V35A14 14 0 1 1 21 21z" fill="#545962"/><circle cx="21" cy="35" r="8"/><path d="M15 40l-4 5M27 40l4 5"/>
 <path d="M3 69h35M3 204h35" stroke="#6b7074" stroke-width="1"/><g fill="${N}" stroke="none"><path d="M17 59h8l-4 3.500zM17 147h8l-4 3.500zM17 194h8l-4 3.500z"/></g>
 <path d="M14 101L6 90q1-4 5-1l4 3-2-13q2-3 4 0l2 8V75q3-3 5 0v12l3-10q3-2 4 1l-2 11 3-5q3-1 3 2L30 101z" fill="#545962"/>
 <path d="M6 109l19 18M25 109L6 127M6 114v-5h6M20 109h5v5M6 122v5h6"/><circle cx="25" cy="126" r="6.500"/><path d="M29 131l6 6" stroke-width="4"/>
 <ellipse cx="20" cy="171" rx="14" ry="5"/><path d="M17 183V162h-3l6-6 6 6h-3v21z" fill="#545962"/><path d="M9 176l6-5v10z" fill="${N}"/>
 <path d="M5 209h8v8H5zM15.500 209h8v8h-8zM26 209h8v8h-8zM5 220h21v16H5z" fill="#545962"/><path d="M11 223v10l8-5z" fill="${N}"/><circle cx="34" cy="253" r="4"/><path d="M31 253h6"/></g>
 <g transform="translate(1839 245)">${ICONS.mdimin.split('|')[1]}</g><g transform="translate(1863.500 236)">${ICONS.mdires.split('|')[1]}</g><g transform="translate(1888 236)">${ICONS.mdix.split('|')[1]}</g>
 </svg><cad-command></cad-command>`;});
define('cad-command',':host{display:block;width:1146px;height:33px}',()=>row(388,33,[X(388,70,'height:33px;background:#2a303b;border-radius:4px 0 0 4px',flow(388,[I('grip',393,6,22),I('x',404,16,16),I('wrench',433,19,20)])),X(458,1074,'height:32px;background:#bcbdbf;border-radius:2px;color:#55585c',flow(458,[I('cmd',463,20,16),I('dtri',485,10,6),T('Type a command',504,126,'font:italic 15px DejaVu Sans Mono,monospace;line-height:20px'),I('up',1517,9,5)]))]));

define('cad-statusbar',':host{display:block;height:39px;border-top:1px solid #4b5057;box-sizing:border-box;color:#c3c6cb;font-size:14.5px}',()=>{
 const lt=(x,w,t,tx,tw,o='')=>X(x,w,`height:23px;background:#323945;clip-path:path('M0 0C8 2 6 20 14 23H${w-12}C${w-4} 20 ${w-8} 2 ${w} 0Z');align-self:flex-start;${o}`,flow(x,[T(t,tx,tw,'margin-top:-2px')]));
 const gr=(x,w,it,o='')=>X(x,w,'height:30px;background:#3b4453;align-self:flex-start;margin-top:1px;'+o,flow(x,it));
 const on=(x,w,ic,ix,iw=20)=>X(x,w,'height:28px;background:#5b8cc4',flow(x,[I(ic,ix,iw)]));
 return row(3,38,[lt(16,80,'Model',35,43.5,'background:#3b4453;color:#fff;font-weight:700'),lt(96,80,'Layout1',108,51),lt(176,82,'Layout2',189,52),X(261,28,"height:21px;margin-top:2px;background:#323945;align-self:flex-start;clip-path:path('M0 21Q2 2 14 0H28Q26 20 14 21Z')",flow(261,[I('plus',267,16,16)])),
 gr(1234,59,[T('MODEL',1238,50.5,'color:#eee')]),gr(1296,80,[on(1297,28,'sgrid',1301),I('sdots',1332,17,20),tri(1366)]),gr(1379,130,[I('sortho',1384),I('spolar',1413),tri(1449),I('siso',1464),tri(1499)]),gr(1510,80,[I('sang',1515),on(1541,28,'sosnap',1545),tri(1580)]),gr(1593,132,[on(1594,27,'sa1',1598,20),I('sa2',1628),I('sa3',1658,18),T('1:1',1689,16,'color:#eee'),tri(1715)]),gr(1728,50,[I('gear',1733),tri(1768)]),gr(1779,30,[I('splus',1783)]),gr(1812,30,[I('siso2',1817)]),gr(1845,4,[]),gr(1852,60,[I('sfull',1857),I('sburger',1887,20,18)])]);});

define('cad-palette',':host{display:flex;box-sizing:border-box;width:269px;height:538px;background:#2b313c;border:1px solid #232933;border-radius:3px;overflow:hidden}.rail{display:flex;flex-direction:column;align-items:center;width:29px;padding-top:4px;gap:12px}.rail cad-icon{flex:none}.v{writing-mode:vertical-rl;transform:rotate(180deg);color:#c3c6cb;font-size:14px;height:81px;width:20px;margin-top:auto;white-space:nowrap;line-height:20px}.card{box-sizing:border-box;width:236px;height:532px;margin-top:3px;background:#3b4453;border:1px solid #222832;border-radius:4px;overflow:hidden;font-size:14.5px;color:#f0f0f0;display:flex;flex-direction:column}.main{display:flex;overflow:hidden;height:480px}.sb{width:6px;height:303px;background:#272d37;border-radius:3px;margin:0 11px 0 6px;flex:none}.list{width:194px;flex:none}',()=>{
 const H=(t,w)=>row(56,27,[T(t,65,w,'font-weight:700;color:#fff'),I('tri',230,11,6)],'background:#2e343f');
 const rw=(a,aw,v)=>`<cad-prop>${flow(78,[T(a,87,aw,'color:#cdd0d4'),X(150,1,'height:26px;background:#2e343f'),...v])}</cad-prop>`;
 const ln=X(155,42,'height:1px;background:#eee');
 const d='color:#9a9ea6';
 return `<div class="rail"><cad-icon name="x" style="width:17px;height:17px"></cad-icon><cad-icon name="pin" style="width:13px;height:14px;margin-top:-4px"></cad-icon><cad-icon name="pgear" style="width:13px;height:13px;margin-top:-2px"></cad-icon><div class="v">PROPERTIES</div><cad-icon name="pcard" style="width:15px;height:20px"></cad-icon></div>
 <div class="card">${row(33,61,[X(57,106,'height:29px;background:#4b576b;border:1px solid #2a313c',flow(58,[T('No selecti...',62,77),tri(153)])),I('padd',173),I('psel',202),I('pquick',231,20,20)],'margin-bottom:-11px')}
 <div class="main"><div class="sb"></div><div class="list">${H('General',54)}${rw('Color',36,[I('green',154,18,18),T('ByLayer',180,51)])}${rw('Layer',35,[T('COTARE',154,55)])}${rw('Linetype',57,[ln,T('ByLa...',202,43)])}${rw('Linetyp...',60,[T('1.0000',154,42)])}${rw('Linewe...',58,[ln,T('ByLa...',202,43)])}${rw('Transp...',55,[T('ByLayer',153,51)])}${rw('Thickn...',55,[T('0.0000',153,43)])}
 <cad-row style="height:4px"></cad-row>${H('3D Visualization',113)}${rw('Material',55,[T('ByLayer',154,51)])}<cad-row style="height:4px"></cad-row>${H('Plot style',65)}${rw('Plot st...',53,[T('ByColor',154,52,d)])}${rw('Plot st...',53,[T('None',154,37)])}${rw('Plot ta...',55,[T('Model',153,43,d)])}${rw('Plot ta...',55,[T('Not available',153,89,d)])}<cad-row style="height:4px"></cad-row>${H('View',34)}${rw('Center X',57,[T('4.8382',153,43,d)])}${rw('Center Y',56,[T('3.9446',153,43,d)])}</div></div></div>`;});
define('cad-prop',':host{display:flex;align-items:center;box-sizing:border-box;width:173px;margin-left:21px;height:26px;border:1px solid #2e343f;border-width:0 1px 1px}',()=>'<slot></slot>');

define('cad-taskbar',':host{display:block;height:50px;background:linear-gradient(90deg,#21373f 0%,#22383f 50%,#1d2f40 78%,#1a2643 100%);color:#fff;font-size:15px}',()=>{
 const ap=(x,w,ic,ix,iw,ih,o)=>X(x,w,`height:50px;border-bottom:3px solid #76b9ed;padding-top:3px;${o||''}`,flow(x,[I(ic,ix,iw,ih)]));
 return row(0,50,[I('win',20,20,20),I('tsearch',80,20,20),I('edge',139,30,30),I('tcmd',201,28,23),ap(253,51,'folder',264,28,25),I('teams',325,29,29),ap(377,51,'chrome',388,28,28),ap(434,56,'tacad',449,30,30,'background:#4e6168'),X(490,5,'height:50px;background:#46575d;border-left:1px solid #2c3f46;border-bottom:3px solid #76b9ed'),
 I('weather',1403,26,25,'transform:translateY(-1px)'),T('55°F',1440,35,'font-size:17px;margin-top:2px'),T('Mostly sunny',1485,105,'font-size:17px;margin-top:2px'),I('caret',1610,20,20),I('batt',1640,20,18),I('wifi',1673,16,16),I('vol',1700,20,18),T('ENG',1733,29),
 [1782,60,m=>`<cad-vbox style="width:60px;margin-left:${m}px;gap:3px">${row(1782,20,[T('6:04 PM',1786,52,'font-size:14.5px')])}${row(1782,20,[T('4/3/2022',1782,60,'font-size:14.500px')])}</cad-vbox>`],
 I('notif',1869,20,20),X(1878,20,'width:20px;height:20px;border-radius:10px;background:#3b4048;border:1px solid #8a8e96;margin-left:-11px;margin-top:19px;justify-content:center','<cad-text style="font-size:13px;font-weight:600">3</cad-text>'),X(1914,1,'height:50px;background:#66707f')]);});

define('cad-window',':host{display:flex;flex-direction:column;box-sizing:border-box;position:relative;width:1917px;height:1030px;margin-left:2px;border:1px solid #0f86c4;background:#232a33}cad-palette{position:absolute;left:-1px;top:62px}',()=>'<cad-titlebar></cad-titlebar><cad-menutabs></cad-menutabs><cad-ribbon></cad-ribbon><cad-doctabs></cad-doctabs><cad-drawing></cad-drawing><cad-statusbar></cad-statusbar><cad-palette></cad-palette>');
define('cad-desktop',':host{display:block;width:1920px;height:1080px;background:linear-gradient(#fff 29px,#0a68b4 29px 57px,#fff 57px 129px,#ccc 129px 159px,#fff 159px)}',()=>'<cad-window></cad-window><cad-taskbar></cad-taskbar>');
</script>
</body>
</html>
